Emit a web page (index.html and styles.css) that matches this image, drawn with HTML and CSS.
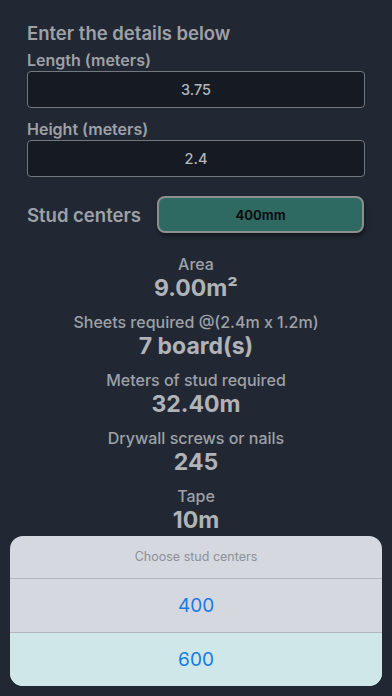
FILE: index.html
```html
<!DOCTYPE html>
<html lang="en">
<head>
  <meta charset="UTF-8" />
  <meta name="viewport" content="width=device-width, initial-scale=1.0"/>
  <title>Drywall Calculator</title>
  <link rel="stylesheet" href="styles.css">
</head>
<body>
  <div class="screen">
    <div class="form">
      <h2>Enter the details below</h2>
      <label>Length (meters)</label>
      <div class="field">3.75</div>
      <label>Height (meters)</label>
      <div class="field">2.4</div>
      <div class="stud-row">
        <span class="stud-label">Stud centers</span>
        <button class="stud-btn">400mm</button>
      </div>
    </div>

    <div class="results">
      <div class="result">
        <div class="r-label">Area</div>
        <div class="r-value">9.00m²</div>
      </div>
      <div class="result">
        <div class="r-label">Sheets required @(2.4m x 1.2m)</div>
        <div class="r-value">7 board(s)</div>
      </div>
      <div class="result">
        <div class="r-label">Meters of stud required</div>
        <div class="r-value">32.40m</div>
      </div>
      <div class="result">
        <div class="r-label">Drywall screws or nails</div>
        <div class="r-value">245</div>
      </div>
      <div class="result">
        <div class="r-label">Tape</div>
        <div class="r-value">10m</div>
      </div>
    </div>

    <div class="sheet">
      <div class="sheet-title">Choose stud centers</div>
      <div class="sheet-opt">400</div>
      <div class="sheet-opt alt">600</div>
    </div>
  </div>
</body>
</html>
```

FILE: styles.css
```css
body {
  margin: 0;
  background: #222833;
  font-family: Inter, 'Noto Sans', sans-serif;
  color: #9ea1a7;
}
.screen {
  position: relative;
  width: 392px;
  height: 696px;
  overflow: hidden;
}
.form {
  padding: 22px 27px 0 27px;
}
h2 {
  margin: 0 0 6px 0;
  font-size: 18.5px;
  font-weight: 600;
  line-height: 22px;
}
label {
  display: block;
  font-size: 16px;
  font-weight: 600;
  line-height: 20px;
  margin-bottom: 1px;
}
.field {
  height: 35px;
  border: 1px solid #73777e;
  border-radius: 4px;
  background: #161a22;
  color: #b4b7bb;
  font-size: 14.5px;
  font-weight: 500;
  display: flex;
  align-items: center;
  justify-content: center;
  margin-bottom: 11px;
}
.stud-row {
  display: flex;
  align-items: center;
  margin-top: 19px;
}
.stud-label {
  width: 130px;
  font-size: 18.5px;
  font-weight: 600;
}
.stud-btn {
  flex: 1;
  height: 37px;
  margin-right: 1px;
  background: #2f6a62;
  border: 2px solid #8d908f;
  border-radius: 8px;
  box-shadow: 1px 3px 4px rgba(0, 0, 0, 0.45);
  color: #0b0d10;
  font-family: Inter, sans-serif;
  font-size: 13px;
  font-weight: 700;
}
.results {
  margin-top: 22px;
  text-align: center;
}
.result {
  margin-bottom: 10px;
}
.r-label {
  font-size: 16px;
  font-weight: 500;
  line-height: 18px;
}
.r-value {
  font-size: 23px;
  font-weight: 700;
  line-height: 30px;
  color: #b0b3b7;
}
.sheet {
  position: absolute;
  left: 10px;
  right: 10px;
  top: 536px;
  height: 150px;
  border-radius: 13px;
  overflow: hidden;
  background: #d5d8df;
}
.sheet-title {
  height: 42px;
  line-height: 42px;
  text-align: center;
  font-size: 12.5px;
  color: #8e9097;
  border-bottom: 1px solid #b2b5bb;
}
.sheet-opt {
  height: 53px;
  line-height: 53px;
  text-align: center;
  font-size: 19px;
  color: #1a7ae3;
}
.sheet-opt.alt {
  border-top: 1px solid #b2b5bb;
  background: #d0e7e9;
}
```
